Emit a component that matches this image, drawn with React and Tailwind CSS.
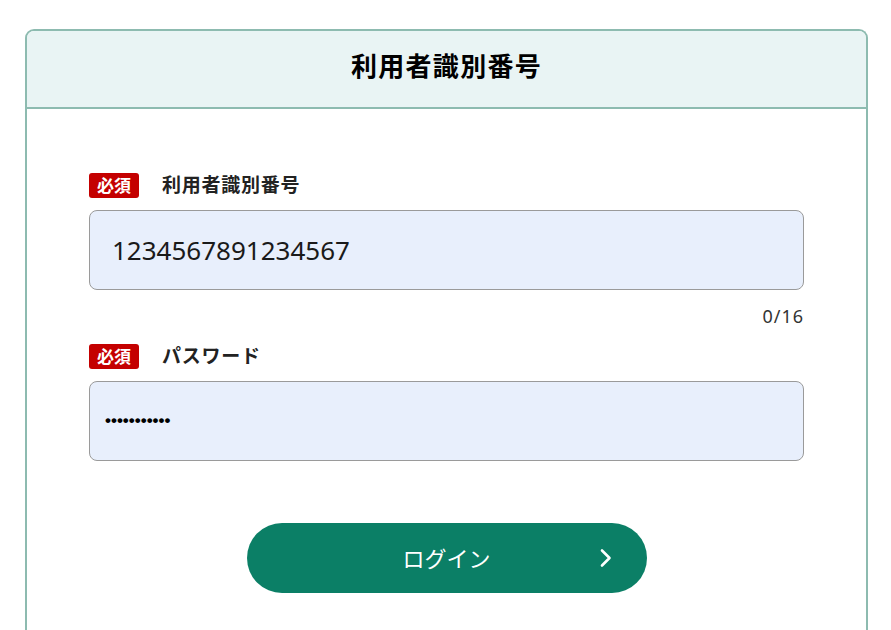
import { useState } from 'react';

const jp = 'font-["Noto_Sans","Noto_Sans_CJK_JP",sans-serif]';

function Required() {
  return (
    <span className="flex h-[25px] w-[50px] items-center justify-center rounded-[3px] bg-[#c40000] text-[17px] font-bold leading-none text-white">
      必須
    </span>
  );
}

function FieldLabel({ children }) {
  return (
    <div className="flex items-center gap-[23px]">
      <Required />
      <span className="text-[19px] font-bold leading-none tracking-[0.04em] text-[#222]">{children}</span>
    </div>
  );
}

export default function App() {
  const [userId, setUserId] = useState('1234567891234567');
  const [password, setPassword] = useState('12345678901');

  return (
    <div className={`h-[630px] overflow-hidden bg-white pt-[29px] ${jp}`}>
      <div className="ml-[25px] w-[843px] rounded-t-[9px] border-2 border-b-0 border-[#8dbbb0] min-h-[700px]">
        {/* Header */}
        <div className="flex h-[78px] items-center justify-center rounded-t-[7px] border-b-2 border-[#8dbbb0] bg-[#e9f4f4]">
          <h1 className="pb-[5px] text-[26px] font-bold tracking-[0.05em] text-black">利用者識別番号</h1>
        </div>

        {/* Form */}
        <form className="px-[62px] pt-[64px]" onSubmit={(e) => e.preventDefault()}>
          <FieldLabel>利用者識別番号</FieldLabel>
          <input
            type="text"
            value={userId}
            onChange={(e) => setUserId(e.target.value)}
            className="mt-[12px] block h-[80px] w-full rounded-[8px] border border-[#9a9a9a] bg-[#e8effc] pl-[22px] text-[26px] text-[#1a1a1a] outline-none"
          />
          <div className="mt-[14px] text-right text-[18px] leading-[24px] tracking-[1px] text-[#333]">0/16</div>

          <div className="mt-[16px]">
            <FieldLabel>パスワード</FieldLabel>
          </div>
          <input
            type="password"
            value={password}
            onChange={(e) => setPassword(e.target.value)}
            className='mt-[12px] block h-[80px] w-full rounded-[8px] border border-[#9a9a9a] bg-[#e8effc] pl-[15px] font-["Liberation_Sans",sans-serif] text-[17px] font-bold text-black outline-none'
          />

          <button
            type="submit"
            className="relative mx-auto mt-[62px] flex h-[70px] w-[400px] items-center justify-center rounded-full bg-[#0b7f66] text-[22px] text-white"
          >
            ログイン
            <svg
              className="absolute right-[34px] top-1/2 -translate-y-1/2"
              width="14"
              height="20"
              viewBox="0 0 14 20"
              fill="none"
              stroke="white"
              strokeWidth="2.6"
              strokeLinecap="round"
              strokeLinejoin="round"
            >
              <path d="M3 2.5 L10.5 10 L3 17.5" />
            </svg>
          </button>
        </form>
      </div>
    </div>
  );
}
